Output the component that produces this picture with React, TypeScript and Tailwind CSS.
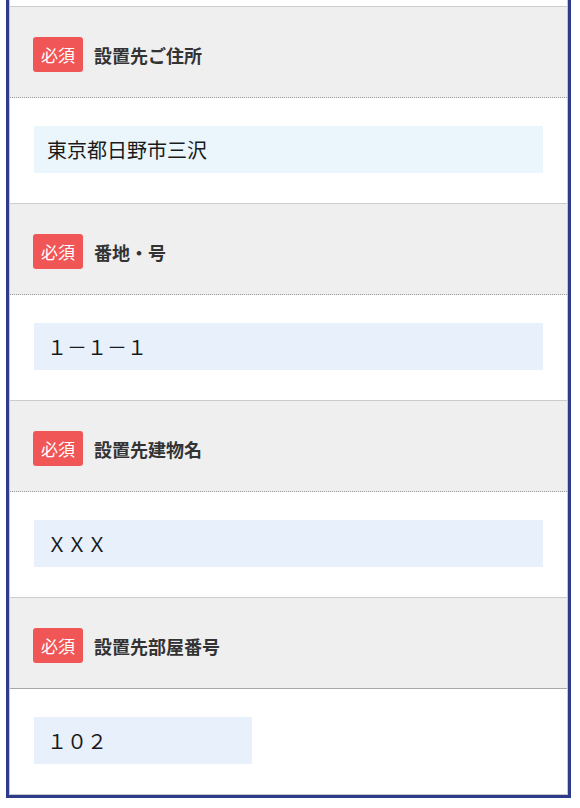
import React from "react";

const rows = [
  { label: "設置先ご住所", value: "東京都日野市三沢", bg: "bg-[#eaf6fc]", full: true, last: false },
  { label: "番地・号", value: "１－１－１", bg: "bg-[#e8f0fb]", full: true, last: false },
  { label: "設置先建物名", value: "ＸＸＸ", bg: "bg-[#e8f0fb]", full: true, last: false },
  { label: "設置先部屋番号", value: "１０２", bg: "bg-[#e8f0fb]", full: false, last: true },
];

export default function App() {
  return (
    <div
      className="w-[580px] h-[808px] bg-white overflow-hidden"
      style={{ fontFamily: '"Noto Sans CJK JP", "Noto Sans", sans-serif' }}
    >
      <div className="ml-[6px] w-[565px] border-x-[3px] border-b-[3px] border-[#2e3a8a]">
        <div className="border-x border-b border-[#c8c8cc] bg-white">
          <div className="h-[6px] bg-white" />
          {rows.map((r) => (
            <div key={r.label} className="border-t border-[#cccccc]">
              <div
                className={
                  "h-[91px] bg-[#efefef] pl-[23px] pt-[30px] border-b " +
                  (r.last ? "border-solid border-[#aaaaaa]" : "border-dotted border-[#999999]")
                }
              >
                <div className="flex items-center gap-[11px]">
                  <span className="w-[50px] h-[35px] rounded-[3px] bg-[#f15656] text-white text-[17px] leading-none flex items-center justify-center">
                    必須
                  </span>
                  <span className="text-[18px] font-bold text-[#333333] leading-none">{r.label}</span>
                </div>
              </div>
              <div className="h-[105px] px-6 pt-[28px]">
                <div
                  className={
                    r.bg +
                    " h-[47px] flex items-center pl-[13px] text-[20px] text-[#1a1a1a] " +
                    (r.full ? "w-full" : "w-[218px]")
                  }
                >
                  {r.value}
                </div>
              </div>
            </div>
          ))}
        </div>
      </div>
    </div>
  );
}
